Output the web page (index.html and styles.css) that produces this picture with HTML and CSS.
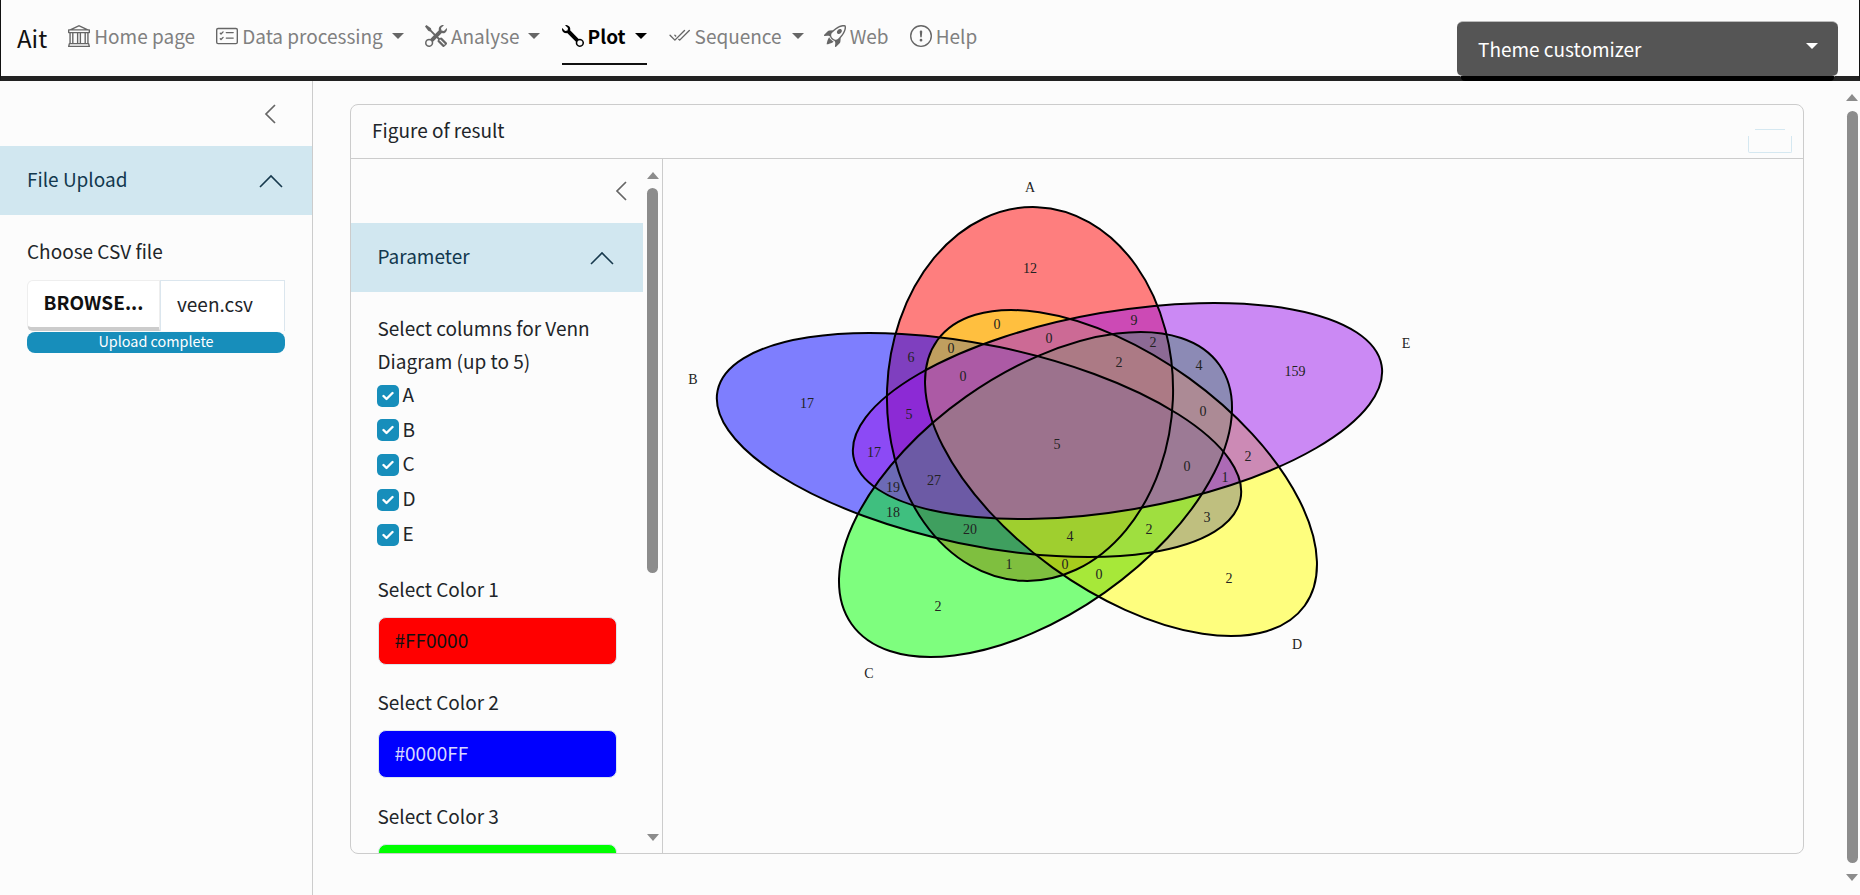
FILE: index.html
```html
<!DOCTYPE html>
<html lang="en">
<head>
<meta charset="utf-8">
<title>Ait</title>
<link rel="stylesheet" href="styles.css">
</head>
<body>
<nav class="nav">
  <span class="brand">Ait</span>
  <a class="item home"><svg class="ico" viewBox="0 0 16 16"><path d="m8 0 6.61 3h.89a.5.5 0 0 1 .5.5v2a.5.5 0 0 1-.5.5H15v7a.5.5 0 0 1 .485.38l.5 2a.498.498 0 0 1-.485.62H.5a.498.498 0 0 1-.485-.62l.5-2A.501.501 0 0 1 1 13V6H.5a.5.5 0 0 1-.5-.5v-2A.5.5 0 0 1 .5 3h.89L8 0ZM3.777 3h8.447L8 1 3.777 3ZM2 6v7h1V6H2Zm2 0v7h2.5V6H4Zm3.5 0v7h1V6h-1Zm2 0v7H12V6H9.5ZM13 6v7h1V6h-1Zm2-1V4H1v1h14Zm-.39 9H1.39l-.25 1h13.72l-.25-1Z"/></svg>Home page</a>
  <a class="item"><svg class="ico" viewBox="0 0 16 16"><path d="M14.5 3a.5.5 0 0 1 .5.5v9a.5.5 0 0 1-.5.5h-13a.5.5 0 0 1-.5-.5v-9a.5.5 0 0 1 .5-.5h13zm-13-1A1.5 1.5 0 0 0 0 3.5v9A1.5 1.5 0 0 0 1.5 14h13a1.5 1.5 0 0 0 1.5-1.5v-9A1.5 1.5 0 0 0 14.5 2h-13z"/><path d="M7 5.5a.5.5 0 0 1 .5-.5h5a.5.5 0 0 1 0 1h-5a.5.5 0 0 1-.5-.5zm-1.496-.854a.5.5 0 0 1 0 .708l-1.5 1.5a.5.5 0 0 1-.708 0l-.5-.5a.5.5 0 1 1 .708-.708l.146.147 1.146-1.147a.5.5 0 0 1 .708 0zM7 9.5a.5.5 0 0 1 .5-.5h5a.5.5 0 0 1 0 1h-5a.5.5 0 0 1-.5-.5zm-1.496-.854a.5.5 0 0 1 0 .708l-1.5 1.5a.5.5 0 0 1-.708 0l-.5-.5a.5.5 0 0 1 .708-.708l.146.147 1.146-1.147a.5.5 0 0 1 .708 0z"/></svg>Data processing<i class="caret"></i></a>
  <a class="item"><svg class="ico" viewBox="0 0 16 16"><path d="M1 0 0 1l2.2 3.081a1 1 0 0 0 .815.419h.07a1 1 0 0 1 .708.293l2.675 2.675-2.617 2.654A3.003 3.003 0 0 0 0 13a3 3 0 1 0 5.878-.851l2.654-2.617.968.968-.305.914a1 1 0 0 0 .242 1.023l3.27 3.27a.997.997 0 0 0 1.414 0l1.586-1.586a.997.997 0 0 0 0-1.414l-3.27-3.27a1 1 0 0 0-1.023-.242L10.5 9.5l-.96-.96 2.68-2.643A3.005 3.005 0 0 0 16 3c0-.269-.035-.53-.102-.777l-2.14 2.141L12 4l-.364-1.757L13.777.102a3 3 0 0 0-3.675 3.68L7.462 6.46 4.793 3.793a1 1 0 0 1-.293-.707v-.071a1 1 0 0 0-.419-.814L1 0Zm9.646 10.646a.5.5 0 0 1 .708 0l2.914 2.915a.5.5 0 0 1-.707.707l-2.915-2.914a.5.5 0 0 1 0-.708ZM3 11l.471.242.529.026.287.445.445.287.026.529L5 13l-.242.471-.026.529-.445.287-.287.445-.529.026L3 15l-.471-.242L2 14.732l-.287-.445L1.268 14l-.026-.529L1 13l.242-.471.026-.529.445-.287.287-.445.529-.026L3 11Z"/></svg>Analyse<i class="caret"></i></a>
  <a class="item active"><svg class="ico" viewBox="0 0 16 16"><path d="M.102 2.223A3.004 3.004 0 0 0 3.78 5.897l6.341 6.252A3.003 3.003 0 0 0 13 16a3 3 0 1 0-.851-5.878L5.897 3.781A3.004 3.004 0 0 0 2.223.1l2.141 2.142L4 4l-1.757.364L.102 2.223zm13.37 9.019.528.026.287.445.445.287.026.529L15 13l-.242.471-.026.529-.445.287-.287.445-.529.026L13 15l-.471-.242-.529-.026-.287-.445-.445-.287-.026-.529L11 13l.242-.471.026-.529.445-.287.287-.445.529-.026L13 11l.471.242z"/></svg>Plot<i class="caret"></i></a>
  <a class="item seq"><svg class="ico" viewBox="0 0 16 16"><path d="M12.354 4.354a.5.5 0 0 0-.708-.708L5 10.293 1.854 7.146a.5.5 0 1 0-.708.708l3.5 3.5a.5.5 0 0 0 .708 0l7-7zm-4.208 7-.896-.897.707-.707.543.543 6.646-6.647a.5.5 0 0 1 .708.708l-7 7a.5.5 0 0 1-.708 0z"/><path d="m5.354 7.146.896.897-.707.707-.897-.896a.5.5 0 1 1 .708-.708z"/></svg>Sequence<i class="caret"></i></a>
  <a class="item"><svg class="ico" viewBox="0 0 16 16"><path d="M9.752 6.193c.599.6 1.73.437 2.528-.362.798-.799.96-1.932.362-2.531-.599-.6-1.73-.438-2.528.361-.798.8-.96 1.933-.362 2.532Z"/><path d="M15.811 3.312c-.363 1.534-1.334 3.626-3.64 6.218l-.24 2.408a2.56 2.56 0 0 1-.732 1.526L8.817 15.85a.51.51 0 0 1-.867-.434l.27-1.899c.04-.28-.013-.593-.131-.956a9.42 9.42 0 0 0-.249-.657l-.082-.202c-.815-.197-1.578-.662-2.191-1.277-.614-.615-1.079-1.379-1.275-2.195l-.203-.083a9.556 9.556 0 0 0-.655-.248c-.363-.119-.675-.172-.955-.132l-1.896.27A.51.51 0 0 1 .15 7.17l2.382-2.386c.41-.41.947-.67 1.524-.734h.006l2.4-.238C9.005 1.55 11.087.582 12.623.208c.89-.217 1.59-.232 2.08-.188.244.023.435.06.57.093.067.017.12.033.16.045.184.06.279.13.351.295l.029.073a3.475 3.475 0 0 1 .157.721c.055.485.051 1.178-.159 2.065Zm-4.828 7.475.04-.04-.107 1.081a1.536 1.536 0 0 1-.44.913l-1.298 1.3.054-.38c.072-.506-.034-.993-.172-1.418a8.548 8.548 0 0 0-.164-.45c.738-.065 1.462-.38 2.087-1.006ZM5.205 5c-.625.626-.94 1.351-1.004 2.09a8.497 8.497 0 0 0-.45-.164c-.424-.138-.91-.244-1.416-.172l-.38.054 1.3-1.3c.245-.246.566-.401.91-.44l1.08-.107-.04.039Zm9.406-3.961c-.38-.034-.967-.027-1.746.163-1.558.38-3.917 1.496-6.937 4.521-.62.62-.799 1.34-.687 2.051.107.676.483 1.362 1.048 1.928.564.565 1.25.941 1.924 1.049.71.112 1.429-.067 2.048-.688 3.079-3.083 4.192-5.444 4.556-6.987.183-.771.18-1.345.138-1.713a2.835 2.835 0 0 0-.045-.283 3.078 3.078 0 0 0-.3-.041Z"/><path d="M7.009 12.139a7.632 7.632 0 0 1-1.804-1.352A7.568 7.568 0 0 1 3.794 8.86c-1.102.992-1.965 5.054-1.839 5.18.125.126 3.936-.896 5.054-1.902Z"/></svg>Web</a>
  <a class="item"><svg class="ico" viewBox="0 0 16 16"><path d="M8 15A7 7 0 1 1 8 1a7 7 0 0 1 0 14zm0 1A8 8 0 1 0 8 0a8 8 0 0 0 0 16z"/><path d="M7.002 11a1 1 0 1 1 2 0 1 1 0 0 1-2 0zM7.1 4.995a.905.905 0 1 1 1.8 0l-.35 3.507a.552.552 0 0 1-1.1 0L7.1 4.995z"/></svg>Help</a>
  <div class="theme"><div class="theme-inner"><span>Theme customizer</span><i class="caret caret-white"></i></div></div>
</nav>

<main class="main">
  <aside class="side">
    <div class="collapse-row"><svg class="chev-left" viewBox="0 0 12 20"><path d="M11 1 2 10l9 9"/></svg></div>
    <div class="acc-head"><span>File Upload</span><svg class="chev-up" viewBox="0 0 24 14"><path d="M1 13 12 2l11 11"/></svg></div>
    <div class="acc-body">
      <div class="label">Choose CSV file</div>
      <div class="file-row">
        <div class="browse">BROWSE...</div>
        <div class="file-name">veen.csv</div>
      </div>
      <div class="progress">Upload complete</div>
    </div>
  </aside>

  <section class="content">
    <div class="card">
      <header class="card-head"><span>Figure of result</span><div class="tool-btn"></div></header>
      <div class="card-body">
        <aside class="param">
          <div class="param-scroll">
            <div class="collapse-row collapse-row-inner"><svg class="chev-left" viewBox="0 0 12 20"><path d="M11 1 2 10l9 9"/></svg></div>
            <div class="acc-head"><span>Parameter</span><svg class="chev-up" viewBox="0 0 24 14"><path d="M1 13 12 2l11 11"/></svg></div>
            <div class="acc-body">
              <div class="label">Select columns for Venn Diagram (up to 5)</div>
              <div class="check"><span class="box"><svg viewBox="0 0 12 10"><path d="M1.5 5 4.5 8l6-6"/></svg></span>A</div>
              <div class="check"><span class="box"><svg viewBox="0 0 12 10"><path d="M1.5 5 4.5 8l6-6"/></svg></span>B</div>
              <div class="check"><span class="box"><svg viewBox="0 0 12 10"><path d="M1.5 5 4.5 8l6-6"/></svg></span>C</div>
              <div class="check"><span class="box"><svg viewBox="0 0 12 10"><path d="M1.5 5 4.5 8l6-6"/></svg></span>D</div>
              <div class="check"><span class="box"><svg viewBox="0 0 12 10"><path d="M1.5 5 4.5 8l6-6"/></svg></span>E</div>
              <div class="label color-label first">Select Color 1</div>
              <div class="swatch red">#FF0000</div>
              <div class="label color-label">Select Color 2</div>
              <div class="swatch blue">#0000FF</div>
              <div class="label color-label third">Select Color 3</div>
              <div class="swatch green"></div>
            </div>
          </div>
          <div class="bar bar-inner"><i class="arrow up"></i><i class="thumb"></i><i class="arrow down"></i></div>
        </aside>
        <div class="plot">
          <svg class="venn" viewBox="663 159 1140 694">
            <defs>
              <ellipse id="ea" cx="1030" cy="394" rx="143" ry="187" transform="rotate(2.2 1030 394)"/>
              <ellipse id="eb" cx="979" cy="445" rx="267" ry="100" transform="rotate(11.76 979 445)"/>
              <ellipse id="ec" cx="1035.5" cy="494.5" rx="225" ry="120" transform="rotate(-35.15 1035.5 494.5)"/>
              <ellipse id="ed" cx="1121" cy="473" rx="226.6" ry="116.7" transform="rotate(35.85 1121 473)"/>
              <ellipse id="ef" cx="1117.5" cy="411" rx="268" ry="99.4" transform="rotate(-9.8 1117.5 411)"/>
              <clipPath id="clipc"><use href="#ec"/></clipPath>
              <mask id="notb" maskUnits="userSpaceOnUse" x="663" y="159" width="1140" height="694">
                <rect class="mask-on" x="663" y="159" width="1140" height="694"/>
                <use href="#eb" class="mask-off"/>
                <use href="#ef" class="mask-off"/>
              </mask>
            </defs>
            <g class="fills">
              <use href="#ea" class="a"/><use href="#eb" class="b"/><use href="#ec" class="c"/><use href="#ed" class="d"/>
            </g>
            <g clip-path="url(#clipc)"><g mask="url(#notb)"><use href="#ed" class="tint"/></g></g>
            <g class="fills"><use href="#ef" class="f"/></g>
            <g class="lines">
              <use href="#ea"/><use href="#eb"/><use href="#ec"/><use href="#ed"/><use href="#ef"/>
            </g>
            <g class="nums">
              <text x="1030" y="187">A</text><text x="693" y="379">B</text><text x="869" y="673">C</text><text x="1297" y="644">D</text><text x="1406" y="343">E</text>
              <text x="1030" y="268">12</text><text x="997" y="324">0</text><text x="951" y="348">0</text><text x="1049" y="338">0</text><text x="911" y="357">6</text><text x="963" y="376">0</text><text x="807" y="403">17</text><text x="909" y="414">5</text><text x="874" y="452">17</text><text x="934" y="480">27</text><text x="893" y="487">19</text><text x="1057" y="444">5</text>
              <text x="1134" y="320">9</text><text x="1153" y="342">2</text><text x="1119" y="362">2</text><text x="1199" y="365">4</text><text x="1295" y="371">159</text><text x="1203" y="411">0</text><text x="1248" y="456">2</text><text x="1187" y="466">0</text><text x="1225" y="477">1</text><text x="1207" y="517">3</text><text x="1149" y="529">2</text><text x="1070" y="536">4</text><text x="1009" y="564">1</text><text x="1065" y="564">0</text><text x="1099" y="574">0</text><text x="1229" y="578">2</text>
              <text x="893" y="512">18</text><text x="970" y="529">20</text><text x="938" y="606">2</text>
            </g>
          </svg>
        </div>
      </div>
    </div>
  </section>
  <div class="bar bar-outer"><i class="arrow up"></i><i class="thumb"></i><i class="arrow down"></i></div>
</main>
</body>
</html>
```

FILE: styles.css
```css
* { box-sizing: border-box; }
html, body { margin: 0; height: 100%; overflow: hidden; }
body {
  background: #fcfcfc;
  color: #212529;
  font-family: "Noto Sans CJK SC", "Source Sans Pro", "Noto Sans", sans-serif;
  font-size: 19px;
  line-height: 33px;
}

/* navbar */
.nav {
  display: flex;
  align-items: center;
  height: 81px;
  padding: 0 21px 5px 16px;
  border-bottom: 5px solid #222;
  border-left: 1px solid #111;
  border-right: 1px solid #111;
  background: #fcfcfc;
}
.brand { font-size: 24px; color: #111; margin: 3px 21px 0 0; }
.item {
  display: flex;
  align-items: center;
  gap: 4px;
  height: 59px;
  margin-right: 21.05px;
  color: #808080;
}
.seq { gap: 5px; margin-right: 20px; }
.ico { width: 22px; height: 22px; fill: #666; flex: none; }
.caret {
  width: 0;
  height: 0;
  margin-left: 5px;
  border-left: 6.5px solid transparent;
  border-right: 6.5px solid transparent;
  border-top: 6.5px solid #666;
}
.active { color: #000; font-weight: 700; padding-top: 2px; border-bottom: 2px solid #111; }
.active .ico { fill: #000; }
.active .caret { border-top-color: #000; }
.theme {
  position: relative;
  margin-left: auto;
  width: 381px;
  height: 60px;
  align-self: flex-end;
  margin-bottom: -10px;
  color: #fff;
}
.theme::after {
  content: "";
  position: absolute;
  left: 4px;
  right: 4px;
  bottom: 0;
  height: 5px;
  background: #000;
  border-radius: 0 0 4px 4px;
}
.theme-inner {
  display: flex;
  align-items: center;
  justify-content: space-between;
  height: 56px;
  padding: 0 20px 0 21px;
  background: #555;
  border-top: 1px solid #bbb;
  border-bottom: 1px solid #eee;
  border-radius: 6px;
}
.caret-white { border-top-color: #fff; margin: 0 0 6px; border-left-width: 6px; border-right-width: 6px; }
.theme-inner span { margin-top: -1px; }

/* page */
.main { display: flex; height: 814px; }
.side { width: 313px; flex: none; border-right: 1px solid #ccc; }
.collapse-row { display: flex; justify-content: flex-end; align-items: center; height: 65px; padding: 0 36px 0 0; }
.collapse-row-inner { height: 64px; padding-right: 16px; }
.chev-left { width: 12px; height: 20px; fill: none; stroke: #666; stroke-width: 1.7; }
.chev-up { width: 24px; height: 14px; fill: none; stroke: #17394d; stroke-width: 1.6; }
.acc-head {
  display: flex;
  justify-content: space-between;
  align-items: center;
  height: 69px;
  padding: 0 29px 0 27px;
  background: #d1e7f0;
  color: #12384e;
}
.acc-head span { margin-top: -4px; }
.acc-body { padding: 19px 27px 0; }
.file-row { display: flex; height: 51px; margin-top: 13px; width: 258px; line-height: 32px; }
.browse {
  width: 133px;
  padding-top: 5px;
  text-align: center;
  font-weight: 700;
  color: #111;
  background: #fff;
  border: 1px solid #eee;
  border-bottom: 4px solid #ccc;
  border-radius: 6px 0 0 6px;
}
.file-name {
  flex: 1;
  padding: 7px 0 0 16px;
  background: #fff;
  border-top: 1px solid #dbe6ee;
  border-left: 1px solid #dbe6ee;
  border-right: 1px solid #dbe6ee;
}
.progress {
  width: 258px;
  height: 21px;
  margin-top: 1px;
  border-radius: 8px;
  background: #178ebb;
  color: #fff;
  font-size: 14.4px;
  line-height: 17px;
  text-align: center;
}

.content { flex: 1; min-width: 0; padding: 23px 40px 41px 37px; }
.card { display: flex; flex-direction: column; height: 750px; border: 1px solid #ccc; border-radius: 8px; overflow: hidden; }
.card-head {
  display: flex;
  justify-content: space-between;
  align-items: center;
  flex: none;
  height: 54px;
  padding: 0 11px 0 21px;
  border-bottom: 1px solid #ccc;
}
.card-head span { margin-top: -4px; }
.tool-btn {
  position: relative;
  align-self: flex-end;
  width: 44px;
  height: 17px;
  margin-bottom: 5px;
  border: 1px solid #d5e8f1;
  border-top: none;
  border-radius: 0 0 2px 2px;
}
.tool-btn::before {
  content: "";
  position: absolute;
  top: -7px;
  left: 6px;
  width: 30px;
  height: 1px;
  background: #d5e8f1;
}
.card-body { display: flex; flex: 1; min-height: 0; }
.param { display: flex; width: 312px; flex: none; border-right: 1px solid #ccc; }
.param-scroll { width: 292px; overflow: hidden; }
.param .acc-body { padding-right: 20px; padding-left: 26.5px; }
.param .acc-head { padding-left: 26.5px; }
.check { display: flex; align-items: center; height: 34.6px; line-height: 34.6px; padding-bottom: 2px; margin-top: .1px; }
.label + .check { margin-top: 1px; }
.box {
  display: flex;
  align-items: center;
  justify-content: center;
  width: 22px;
  height: 22px;
  margin: 3px 4px 0 -1px;
  border-radius: 5px;
  background: #178ebb;
}
.box svg { width: 12px; height: 10px; fill: none; stroke: #fff; stroke-width: 2.4; stroke-linecap: round; stroke-linejoin: round; }
.color-label { margin: 20.5px 0 11.5px; }
.first { margin-top: 21px; }
.third { margin-top: 21.5px; }
.swatch { height: 48px; width: 239px; padding: 5px 16px; border-radius: 8px; border: 1px solid #dbe6ee; }
.red { background: #f00; color: #111; }
.blue { background: #00f; color: #d8d8ff; }
.green { background: #0f0; }

.plot { flex: 1; min-width: 0; }
.venn { display: block; width: 100%; height: 100%; }
.fills use { fill-opacity: .5; }
.a { fill: #f00; }
.b { fill: #00f; }
.c { fill: #0f0; }
.d { fill: #ff0; }
.f { fill: #9915eb; }
.tint { fill: rgba(0, 72, 16, .125); }
.mask-on { fill: #fff; }
.mask-off { fill: #000; }
.lines use { fill: none; stroke: #000; stroke-width: 2; }
.nums text {
  font-family: "Liberation Serif", serif;
  font-size: 14px;
  fill: #222;
  text-anchor: middle;
  dominant-baseline: central;
}

/* drawn scrollbars */
.bar { display: flex; flex-direction: column; align-items: center; flex: none; }
.bar .thumb { display: block; width: 11px; background: #8c8c8c; border-radius: 6px; }
.arrow { display: block; width: 0; height: 0; border-left: 6.5px solid transparent; border-right: 6.5px solid transparent; }
.arrow.up { border-bottom: 7px solid #8c8c8c; }
.arrow.down { border-top: 7px solid #8c8c8c; }
.bar-inner { width: 19px; padding-top: 13px; }
.bar-inner .thumb { height: 385px; margin: 9px 0 261px; }
.bar-outer { width: 16px; padding-top: 13px; }
.bar-outer .thumb { height: 752px; margin: 10px 0 11px; }
```
